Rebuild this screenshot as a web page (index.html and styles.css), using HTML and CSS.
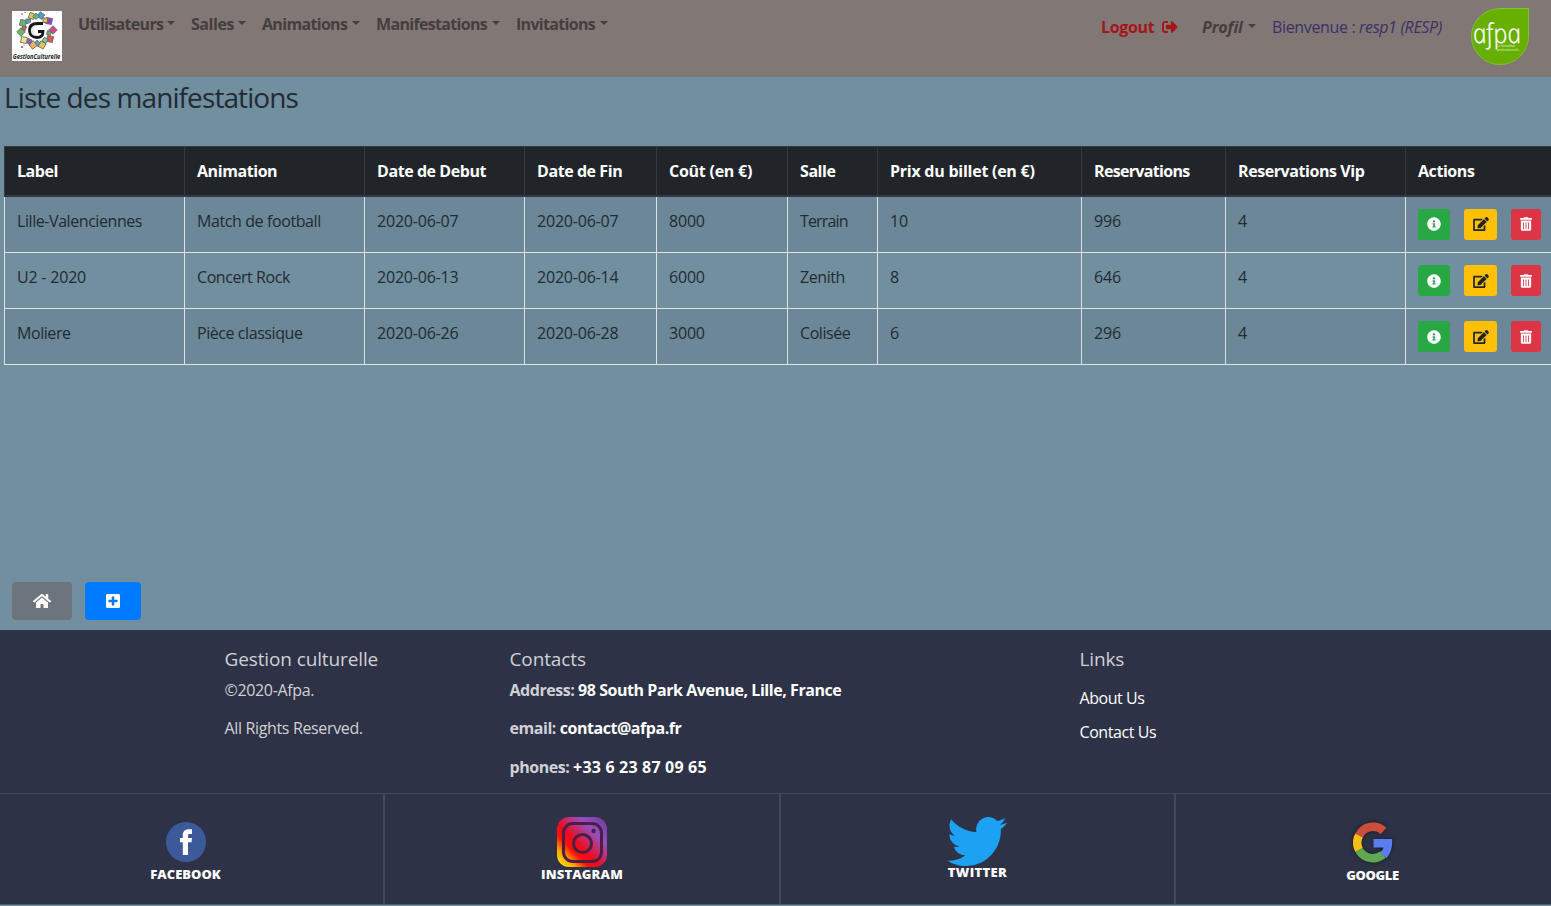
FILE: index.html
```html
<!DOCTYPE html>
<html lang="fr">
<head>
<meta charset="utf-8">
<title>Liste des manifestations</title>
<link rel="stylesheet" href="styles.css">
</head>
<body>
<svg class="defs" width="0" height="0">
  <symbol id="info" viewBox="0 0 512 512"><path d="M256 8C119 8 8 119 8 256s111 248 248 248 248-111 248-248S393 8 256 8zm0 110c23.200 0 42 18.800 42 42s-18.800 42-42 42-42-18.800-42-42 18.800-42 42-42zm56 254c0 6.600-5.400 12-12 12h-88c-6.600 0-12-5.400-12-12v-24c0-6.600 5.400-12 12-12h12v-64h-12c-6.600 0-12-5.400-12-12v-24c0-6.600 5.400-12 12-12h64c6.600 0 12 5.400 12 12v100h12c6.600 0 12 5.400 12 12v24z"/></symbol>
  <symbol id="edit" viewBox="0 0 576 512"><path d="M402.600 83.200l90.200 90.200c3.800 3.800 3.800 10 0 13.800L274.400 405.600l-92.800 10.300c-12.400 1.400-22.900-9.100-21.500-21.500l10.300-92.800L388.800 83.200c3.800-3.800 10-3.800 13.800 0zm162-22.900l-48.800-48.800c-15.200-15.200-39.900-15.200-55.200 0l-35.400 35.400c-3.800 3.800-3.800 10 0 13.800l90.200 90.200c3.800 3.800 10 3.800 13.800 0l35.400-35.400c15.200-15.300 15.200-40 0-55.200zM384 346.200V448H64V128h229.800c3.200 0 6.200-1.300 8.500-3.500l40-40c7.600-7.600 2.200-20.500-8.500-20.500H48C21.500 64 0 85.500 0 112v352c0 26.500 21.500 48 48 48h352c26.500 0 48-21.500 48-48V306.200c0-10.700-12.900-16-20.500-8.500l-40 40c-2.200 2.300-3.500 5.300-3.500 8.500z"/></symbol>
  <symbol id="trash" viewBox="0 0 448 512"><path d="M32 464a48 48 0 0 0 48 48h288a48 48 0 0 0 48-48V128H32zm272-256a16 16 0 0 1 32 0v224a16 16 0 0 1-32 0zm-96 0a16 16 0 0 1 32 0v224a16 16 0 0 1-32 0zm-96 0a16 16 0 0 1 32 0v224a16 16 0 0 1-32 0zM432 32H312l-9.400-18.700A24 24 0 0 0 281.100 0H166.800a23.700 23.700 0 0 0-21.400 13.300L136 32H16A16 16 0 0 0 0 48v32a16 16 0 0 0 16 16h416a16 16 0 0 0 16-16V48a16 16 0 0 0-16-16z"/></symbol>
</svg>

<nav class="navbar">
  <svg class="brand" viewBox="0 0 50 50">
    <rect width="50" height="50" fill="#fff"/>
    <g stroke="#666" stroke-width=".8">
      <rect x="17" y="2" width="5.500" height="5.500" fill="#e4c95c" transform="rotate(20 19 5)"/>
      <rect x="26" y="2" width="5.500" height="5.500" fill="#4b9fd5" transform="rotate(35 29 5)"/>
      <rect x="22" y="3" width="4.500" height="4.500" fill="#5ebb70" transform="rotate(45 24 5)"/>
      <rect x="34" y="7" width="6" height="6" fill="#9147b5" transform="rotate(10 37 10)"/>
      <rect x="31" y="7" width="4.500" height="4.500" fill="#e3b951"/>
      <rect x="38" y="16" width="6" height="6" fill="#dc438d" transform="rotate(45 41 19)"/>
      <rect x="35" y="20" width="4" height="4" fill="#65b55d" transform="rotate(15 37 22)"/>
      <rect x="35" y="25" width="6" height="6" fill="#e05254" transform="rotate(12 38 28)"/>
      <rect x="31" y="27" width="4.500" height="4.500" fill="#7ec8aa" transform="rotate(30 33 29)"/>
      <rect x="27" y="31" width="6" height="6" fill="#e4c456" transform="rotate(30 30 34)"/>
      <rect x="23" y="30" width="4.500" height="4.500" fill="#55a6d2" transform="rotate(45 25 32)"/>
      <rect x="18" y="31" width="6" height="6" fill="#e7b45b" transform="rotate(50 21 34)"/>
      <rect x="15" y="28" width="4.500" height="4.500" fill="#8b5ec3" transform="rotate(25 17 30)"/>
      <rect x="9" y="26" width="6" height="6" fill="#ece391" transform="rotate(10 12 29)"/>
      <rect x="6" y="18" width="6" height="6" fill="#62bd68" transform="rotate(45 9 21)"/>
      <rect x="10" y="15" width="4" height="4" fill="#da5a62" transform="rotate(20 12 17)"/>
      <rect x="8" y="9" width="6" height="6" fill="#68b966" transform="rotate(15 11 12)"/>
      <rect x="14" y="8" width="4.500" height="4.500" fill="#549fc4"/>
    </g>
    <g fill="#923060"><circle cx="10" cy="3" r=".8"/><circle cx="13" cy="1.500" r=".6"/><circle cx="10" cy="36" r=".9"/><circle cx="12" cy="34" r=".6"/></g>
    <circle cx="24" cy="19" r="9.500" fill="#fff"/>
    <path d="M31 12.500H25.500C20 12.500 17.500 15.500 17.500 19.500S20.500 26.500 25 26.500C29 26.500 31 24.500 31 20.500H26" fill="none" stroke="#181818" stroke-width="2.800"/>
    <path d="M26 14.500C22 14.500 20 16 20 19.500S22 24.500 25 24.500" fill="none" stroke="#aaa" stroke-width=".5"/>
    <text x=".8" y="48" class="brand-text" textLength="47.500" lengthAdjust="spacingAndGlyphs">GestionCulturelle</text>
  </svg>
  <ul class="menu">
    <li class="m1"><span>Utilisateurs</span><i></i></li>
    <li class="m2"><span>Salles</span><i></i></li>
    <li class="m3"><span>Animations</span><i></i></li>
    <li class="m4"><span>Manifestations</span><i></i></li>
    <li class="m5"><span>Invitations</span><i></i></li>
  </ul>
  <div class="session">
    <span class="logout">Logout</span>
    <svg class="out" viewBox="0 0 512 512"><path d="M497 273L329 441c-15 15-41 4.500-41-17v-96H152c-13.300 0-24-10.700-24-24v-96c0-13.300 10.700-24 24-24h136V88c0-21.400 25.900-32 41-17l168 168c9.300 9.400 9.300 24.600 0 34zM192 436v-40c0-6.600-5.400-12-12-12H96c-17.700 0-32-14.300-32-32V160c0-17.700 14.300-32 32-32h84c6.600 0 12-5.400 12-12V76c0-6.600-5.400-12-12-12H96c-53 0-96 43-96 96v192c0 53 43 96 96 96h84c6.600 0 12-5.400 12-12z"/></svg>
    <span class="profil">Profil</span><i></i>
    <span class="welcome">Bienvenue : <em>resp1 (RESP)</em></span>
  </div>
  <svg class="afpa" viewBox="0 0 58 58">
    <path d="M29 .5H57.500V28A28.500 28 0 1 1 29 .5z" fill="#67af00" stroke="#83bd32"/>
    <g transform="translate(3.500 34.500) skewX(12)"><text class="afpa-name" textLength="48" lengthAdjust="spacingAndGlyphs">afpa</text></g>
    <text x="26" y="39" class="afpa-sub" textLength="18">La formation</text>
    <text x="26" y="42.500" class="afpa-sub" textLength="22">professionnelle</text>
  </svg>
</nav>

<main>
  <h1>Liste des manifestations</h1>
  <table>
    <colgroup><col style="width:180px"><col style="width:180px"><col style="width:160px"><col style="width:132px"><col style="width:131px"><col style="width:90px"><col style="width:204px"><col style="width:144px"><col style="width:180px"><col style="width:160px"></colgroup>
    <thead><tr><th>Label</th><th>Animation</th><th>Date de Debut</th><th>Date de Fin</th><th class="wide">Coût (en €)</th><th>Salle</th><th class="wide">Prix du billet (en €)</th><th class="tight">Reservations</th><th>Reservations Vip</th><th>Actions</th></tr></thead>
    <tbody>
      <tr><td>Lille-Valenciennes</td><td class="loose">Match de football</td><td class="n">2020-06-07</td><td class="n">2020-06-07</td><td class="n">8000</td><td class="tight">Terrain</td><td class="n">10</td><td class="n">996</td><td class="n">4</td><td><div class="actions"><b class="green"><svg><use href="#info"/></svg></b><b class="yellow"><svg><use href="#edit"/></svg></b><b class="red"><svg><use href="#trash"/></svg></b></div></td></tr>
      <tr><td class="n">U2 - 2020</td><td>Concert Rock</td><td class="n">2020-06-13</td><td class="n">2020-06-14</td><td class="n">6000</td><td>Zenith</td><td class="n">8</td><td class="n">646</td><td class="n">4</td><td><div class="actions"><b class="green"><svg><use href="#info"/></svg></b><b class="yellow"><svg><use href="#edit"/></svg></b><b class="red"><svg><use href="#trash"/></svg></b></div></td></tr>
      <tr><td>Moliere</td><td>Pièce classique</td><td class="n">2020-06-26</td><td class="n">2020-06-28</td><td class="n">3000</td><td>Colisée</td><td class="n">6</td><td class="n">296</td><td class="n">4</td><td><div class="actions"><b class="green"><svg><use href="#info"/></svg></b><b class="yellow"><svg><use href="#edit"/></svg></b><b class="red"><svg><use href="#trash"/></svg></b></div></td></tr>
    </tbody>
  </table>
  <div class="buttons">
    <b class="home"><svg viewBox="0 0 576 512"><path d="M280.400 148.300L96 300.100V464a16 16 0 0 0 16 16l112.100-.3a16 16 0 0 0 15.900-16V368a16 16 0 0 1 16-16h64a16 16 0 0 1 16 16v95.600a16 16 0 0 0 16 16.100L464 480a16 16 0 0 0 16-16V300L295.700 148.300a12.200 12.200 0 0 0-15.300 0zM571.600 251.500L488 182.600V44.100a12 12 0 0 0-12-12h-56a12 12 0 0 0-12 12v72.600L318.500 43a48 48 0 0 0-61 0L4.300 251.500a12 12 0 0 0-1.600 16.900l25.500 31A12 12 0 0 0 45.200 301l235.200-193.700a12.200 12.200 0 0 1 15.300 0L530.900 301a12 12 0 0 0 16.900-1.600l25.500-31a12 12 0 0 0-1.700-16.900z"/></svg></b>
    <b class="plus"><svg viewBox="0 0 448 512"><path d="M400 32H48C21.500 32 0 53.500 0 80v352c0 26.500 21.500 48 48 48h352c26.500 0 48-21.500 48-48V80c0-26.500-21.500-48-48-48zm-32 252c0 6.600-5.400 12-12 12h-92v92c0 6.600-5.400 12-12 12h-56c-6.600 0-12-5.400-12-12v-92H92c-6.600 0-12-5.400-12-12v-56c0-6.600 5.400-12 12-12h92v-92c0-6.600 5.400-12 12-12h56c6.600 0 12 5.400 12 12v92h92c6.600 0 12 5.400 12 12v56z"/></svg></b>
  </div>
</main>

<footer>
  <div class="info">
    <section class="about"><h2>Gestion culturelle</h2><p>©2020-Afpa.</p><p>All Rights Reserved.</p></section>
    <section class="contacts"><h2>Contacts</h2><p>Address: <a>98 South Park Avenue, Lille, France</a></p><p>email: <a>contact@afpa.fr</a></p><p>phones: <a class="phone">+33 6 23 87 09 65</a></p></section>
    <section class="links"><h2>Links</h2><a>About Us</a><a>Contact Us</a></section>
  </div>
  <div class="social">
    <div class="facebook"><svg width="40" height="40" viewBox="0 0 40 40"><circle cx="20" cy="20" r="20" fill="#3c5a9a"/><path d="M16.800 33V20.200H14V16H16.800V13.300C16.800 9.500 19 7.300 22.600 7.300H26V12H23.800C22.500 12 22 12.600 22 13.800V16H26L25.500 20.200H22V33z" fill="#fff"/></svg><span>FACEBOOK</span></div>
    <div class="instagram"><svg width="50" height="50" viewBox="0 0 50 50"><defs><linearGradient id="ig" x1="0" y1="1" x2="1" y2="0"><stop offset=".06" stop-color="#fd0"/><stop offset=".18" stop-color="#ffa800"/><stop offset=".32" stop-color="#fe1004"/><stop offset=".44" stop-color="#f00a1c"/><stop offset=".72" stop-color="#9550bd"/><stop offset="1" stop-color="#6d37a0"/></linearGradient></defs><rect width="50" height="50" rx="12" fill="url(#ig)"/><g fill="none" stroke="#4a1f45" stroke-width="3"><rect x="6.500" y="6.500" width="38" height="38" rx="9.500"/><circle cx="25.500" cy="26.500" r="9"/></g><circle cx="36.500" cy="14" r="2.200" fill="#4a1f55"/></svg><span>INSTAGRAM</span></div>
    <div class="twitter"><svg width="60" height="49" viewBox="0 2.250 24 19.500" preserveAspectRatio="none"><path fill="#1da1f2" d="M23.953 4.570a10 10 0 01-2.825.775 4.958 4.958 0 002.163-2.723c-.951.555-2.005.959-3.127 1.184a4.920 4.920 0 00-8.384 4.482C7.690 8.095 4.067 6.130 1.640 3.162a4.822 4.822 0 00-.666 2.475c0 1.710.87 3.213 2.188 4.096a4.904 4.904 0 01-2.228-.616v.06a4.923 4.923 0 003.946 4.827 4.996 4.996 0 01-2.212.085 4.936 4.936 0 004.604 3.417 9.867 9.867 0 01-6.102 2.105c-.39 0-.779-.023-1.170-.067a13.995 13.995 0 007.557 2.209c9.053 0 13.998-7.496 13.998-13.985 0-.21 0-.42-.015-.63A9.935 9.935 0 0024 4.590z"/></svg><span>TWITTER</span></div>
    <div class="google"><svg width="40" height="41" viewBox="0 0 40 41"><g fill="none" stroke-width="8.500"><path d="M30.700 8.800A15.800 15.800 0 0 0 6 13.500" stroke="#cc4f3c"/><path d="M6 13.500A15.800 15.800 0 0 0 6 28" stroke="#f4c016"/><path d="M6 28A15.800 15.800 0 0 0 30 32.400" stroke="#60a751"/></g><path d="M20.500 17H39C39.800 24 38 31 33.500 36L27 30.500C29 29 30 27.500 30.500 25.500H20.500z" fill="#5a7df0"/></svg><span>GOOGLE</span></div>
  </div>
</footer>
</body>
</html>
```
FILE: styles.css
```css
* { box-sizing: border-box; }
body { margin: 0; width: 1551px; height: 906px; overflow: hidden; background: #728fa0; color: #212b33; font: 16px/24px "Open Sans", "Noto Sans", sans-serif; letter-spacing: -.43px; display: flex; flex-direction: column; }
.defs { display: none; }
svg { display: block; flex: none; }
h1, h2, p, ul { margin: 0; padding: 0; font-weight: 400; }

.navbar { height: 77px; flex: none; background: #817775; display: flex; align-items: flex-start; }
.brand { width: 50px; height: 50px; margin: 11px 0 0 12px; }
.brand-text { font: italic 700 7px "Open Sans", sans-serif; letter-spacing: 0; fill: #222; }
.menu { list-style: none; display: flex; margin: 12px 0 0 16px; font-weight: 700; color: #443e3d; letter-spacing: -.68px; }
.menu li { display: flex; margin-right: 16px; white-space: nowrap; }
.menu li span { flex: 1; }
.m1 { width: 97px; }
.m2 { width: 55px; }
.m3 { width: 98px; }
.m4 { width: 124px; }
.m5 { width: 92px; }
.m2 { letter-spacing: -.45px; }
.navbar i { width: 8px; height: 4px; margin-top: 9px; border: 4px solid transparent; border-top-color: #443e3d; border-bottom: 0; }
.session { display: flex; margin: 15px 0 0 auto; white-space: nowrap; letter-spacing: -.35px; }
.logout { width: 61px; color: #a5161b; font-weight: 700; }
.out { width: 16px; height: 16px; margin-top: 4px; fill: #a5161b; }
.profil { width: 46px; margin-left: 24px; color: #443e3d; font-weight: 700; font-style: italic; letter-spacing: -.1px; }
.welcome { width: 172px; margin-left: 16px; color: #3b3168; }
.afpa { width: 58px; height: 58px; margin: 8px 22px 0 27px; }
.afpa-name { font: italic 300 27px "Open Sans", sans-serif; fill: #fff; stroke: #fff; stroke-width: .3px; letter-spacing: 0; }
.afpa-sub { font: 3.500px Lato, sans-serif; fill: #d4edac; letter-spacing: 0; }

main { height: 553px; flex: none; padding-left: 4px; display: flex; flex-direction: column; }
h1 { height: 69px; padding-top: 3px; font-size: 28px; line-height: 34px; letter-spacing: -.9px; }
table { width: 1561px; table-layout: fixed; border-collapse: collapse; }
th, td { padding: 12px 0 0 12px; text-align: left; vertical-align: top; border: 1px solid #dee2e6; white-space: nowrap; }
th { height: 49px; background: #212529; color: #fff; border: 1px solid #32383e; border-bottom-width: 2px; }
td { height: 56px; }
tbody tr:first-child td { height: 57px; }
tbody tr:nth-child(odd) { background: rgba(0, 0, 0, .05); }
.n { letter-spacing: -.2px; }
.wide { letter-spacing: -.25px; }
.loose { letter-spacing: -.4px; }
td.tight { letter-spacing: -.85px; }
.tight { letter-spacing: -.68px; }
.actions { display: flex; }
.actions b { height: 31px; display: flex; align-items: center; justify-content: center; border-radius: 3px; }
.actions svg { height: 14px; }
.green { width: 32px; background: #28a745; fill: #fff; }
.green svg { width: 14px; }
.yellow { width: 33px; margin: 0 14px; background: #ffc107; fill: #212529; }
.yellow svg { width: 16px; }
.red { width: 30px; background: #dc3545; fill: #fff; }
.red svg { width: 12px; }
.buttons { display: flex; gap: 13px; margin: auto 0 10px 8px; }
.buttons b { height: 38px; display: flex; align-items: center; justify-content: center; border-radius: 4px; fill: #fff; }
.buttons svg { height: 16px; }
.home { width: 60px; background: #6c757d; }
.plus { width: 56px; background: #007bff; }

footer { height: 275px; flex: none; background: #2d3246; color: #cfd1d6; }
.info { height: 163px; padding: 17px 0 0 224.500px; display: grid; grid-template-columns: 285px 570px 1fr; }
h2 { font-size: 19px; line-height: 24px; letter-spacing: -.12px; }
.info p { margin: 7px 0 14.300px; letter-spacing: -.35px; }
.info p + p { margin-top: 0; }
.info a { color: #fff; }
.info .contacts p { font-weight: 700; letter-spacing: -.45px; }
.info .phone { letter-spacing: .18px; }
.links { display: flex; flex-direction: column; }
.links a { margin-top: 15px; }
.links a + a { margin-top: 10px; }
.social { height: 112px; width: 1581px; margin-left: -10px; border-top: 1px solid #434859; border-bottom: 1px solid #4c5f6b; display: grid; grid-template-columns: 395px 396px 395px 395px; color: #fff; font-size: 13px; font-weight: 800; line-height: 16px; letter-spacing: 0; }
.social div { display: flex; flex-direction: column; align-items: center; border-right: 2px solid #434859; padding-top: 23px; }
.social .facebook, .social .google { padding-top: 28px; }
.social .facebook, .social .twitter { padding-right: 2px; }
.instagram span, .twitter span { margin-top: -1px; }
.twitter { letter-spacing: .35px; }
.instagram { letter-spacing: .15px; }
.twitter span { padding-left: 2px; margin-top: -2px; }
.facebook span { margin-top: 4px; }
.google span { margin-top: 4px; }
.google { letter-spacing: -.4px; }
.google svg { filter: drop-shadow(0 0 2px #151923); }
```
